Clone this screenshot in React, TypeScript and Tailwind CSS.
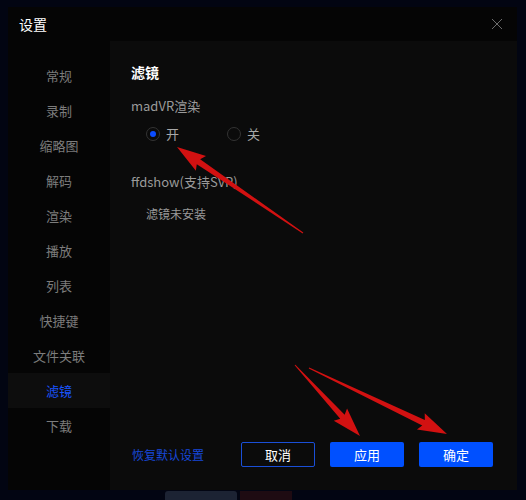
import React from "react";

const navItems = ["常规", "录制", "缩略图", "解码", "渲染", "播放", "列表", "快捷键", "文件关联", "滤镜", "下载"];

type Pt = [number, number];

function arrowPoints(tail: Pt, tip: Pt, headLen: number, headW: number, tailW: number, neckW: number) {
  const dx = tip[0] - tail[0];
  const dy = tip[1] - tail[1];
  const len = Math.hypot(dx, dy);
  const ux = dx / len;
  const uy = dy / len;
  const nx = -uy;
  const ny = ux;
  const neck: Pt = [tip[0] - ux * headLen, tip[1] - uy * headLen];
  const pts: Pt[] = [
    [tail[0] + nx * tailW / 2, tail[1] + ny * tailW / 2],
    [neck[0] + nx * neckW / 2, neck[1] + ny * neckW / 2],
    [neck[0] + nx * headW / 2 - ux * 3, neck[1] + ny * headW / 2 - uy * 3],
    tip,
    [neck[0] - nx * headW / 2 - ux * 3, neck[1] - ny * headW / 2 - uy * 3],
    [neck[0] - nx * neckW / 2, neck[1] - ny * neckW / 2],
    [tail[0] - nx * tailW / 2, tail[1] - ny * tailW / 2],
  ];
  return pts.map((p) => p.join(",")).join(" ");
}

function Arrows() {
  return (
    <svg className="pointer-events-none absolute left-0 top-0" width={526} height={500}>
      <polygon points={arrowPoints([303, 233], [177, 147], 26, 18, 1, 6)} fill="#d21111" />
      <polygon points={arrowPoints([295, 365], [360, 436], 26, 18, 1, 6)} fill="#d21111" />
      <polygon points={arrowPoints([309, 368], [447, 434], 26, 18, 1, 6)} fill="#d21111" />
    </svg>
  );
}

function Radio({ checked, label }: { checked?: boolean; label: string }) {
  return (
    <div className="flex items-center gap-[6px]">
      <span className="flex h-[14px] w-[14px] items-center justify-center rounded-full border border-[#333]">
        {checked && <span className="h-[6px] w-[6px] rounded-full bg-[#0a4cff]" />}
      </span>
      <span className="text-[13px] text-[#a8a8a8]">{label}</span>
    </div>
  );
}

export default function App() {
  return (
    <div
      className="relative h-[500px] w-[526px] overflow-hidden bg-[#020512]"
      style={{ fontFamily: '"Noto Sans CJK SC", "Noto Sans", sans-serif' }}
    >
      <div className="absolute left-[165px] top-[491px] h-[9px] w-[72px] rounded-t-[3px] bg-[#1c2333]" />
      <div className="absolute left-[240px] top-[491px] h-[9px] w-[52px] bg-[#1e0b12]" />
      <div className="ml-[8px] mt-[7px] flex h-[483px] w-[509px] flex-col bg-[#050505]">
        <div className="flex h-[34px] items-center justify-between pl-[11px] pr-[14px]">
          <span className="text-[14px] text-white">设置</span>
          <svg width="12" height="12" viewBox="0 0 12 12">
            <path d="M1 1L11 11M11 1L1 11" stroke="#6b6b6b" strokeWidth="1" />
          </svg>
        </div>
        <div className="flex min-h-0 flex-1">
          <div className="flex w-[102px] shrink-0 flex-col pt-[17px]">
            {navItems.map((item) => (
              <div
                key={item}
                className={
                  item === "滤镜"
                    ? "flex h-[35px] items-center justify-center bg-[#0d0d0d] text-[13px] text-[#1a55ff]"
                    : "flex h-[35px] items-center justify-center text-[13px] text-[#7c7c7c]"
                }
              >
                {item}
              </div>
            ))}
          </div>
          <div className="flex flex-1 flex-col bg-[#0b0b0b] pl-[21px] pr-[24px] pt-[20px] pb-[23px]">
            <div className="text-[14px] font-bold leading-[22px] text-white">滤镜</div>
            <div className="mt-[14px] text-[13px] leading-[18px] text-[#9a9a9a]">madVR渲染</div>
            <div className="mt-[9px] flex gap-[48px] pl-[15px]">
              <Radio checked label="开" />
              <Radio label="关" />
            </div>
            <div className="mt-[29px] text-[13px] leading-[18px] text-[#9a9a9a]">ffdshow(支持SVP)</div>
            <div className="mt-[14px] pl-[15px] text-[12px] leading-[18px] text-[#9a9a9a]">滤镜未安装</div>
            <div className="mt-auto flex items-center justify-between">
              <span className="ml-px whitespace-nowrap text-[12px] text-[#1748d8]">恢复默认设置</span>
              <div className="flex gap-[15px]">
                <button className="h-[25px] w-[74px] shrink-0 rounded-[2px] border border-[#1a4fd8] text-[13px] text-white">
                  取消
                </button>
                <button className="h-[25px] w-[74px] shrink-0 rounded-[2px] bg-[#0050ff] text-[13px] text-white">
                  应用
                </button>
                <button className="h-[25px] w-[74px] shrink-0 rounded-[2px] bg-[#0050ff] text-[13px] text-white">
                  确定
                </button>
              </div>
            </div>
          </div>
        </div>
      </div>
      <Arrows />
    </div>
  );
}
